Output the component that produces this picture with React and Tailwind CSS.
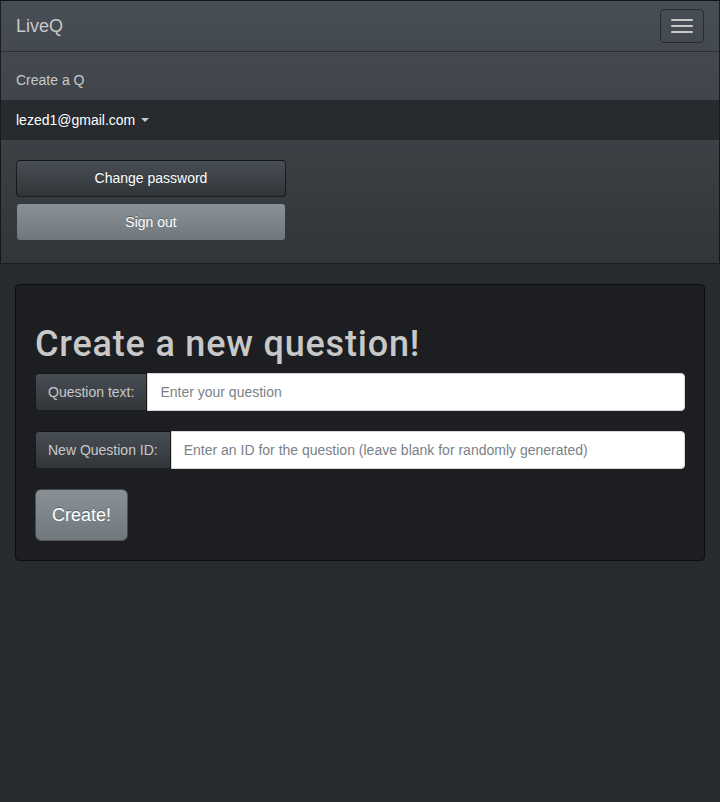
import React from "react";

export default function App() {
  return (
    <div className="min-h-screen bg-[#272b30] font-['Liberation_Sans',Arial,sans-serif] text-[14px] text-[#c8c8c8]">
      <nav className="border border-black/60 bg-[linear-gradient(#484e55,#3a3f44_60%,#313539)]">
        <div className="flex h-[50px] items-center justify-between px-[15px]">
          <span className="text-[18px] leading-[20px] text-[#c8c8c8]">LiveQ</span>
          <button className="flex h-[34px] w-[44px] flex-col items-center justify-center gap-[4px] rounded-[4px] border border-[#272b30]">
            <span className="block h-[2px] w-[22px] rounded-[1px] bg-[#c8c8c8]" />
            <span className="block h-[2px] w-[22px] rounded-[1px] bg-[#c8c8c8]" />
            <span className="block h-[2px] w-[22px] rounded-[1px] bg-[#c8c8c8]" />
          </button>
        </div>
        <div className="border-t border-[#2b2f33] py-[8px]">
          <div className="flex h-[40px] items-center px-[15px] text-[#c8c8c8]">Create a Q</div>
          <div className="flex h-[40px] items-center bg-[#272b30] px-[15px] text-white">
            lezed1@gmail.com
            <span className="ml-[6px] inline-block h-0 w-0 border-x-[4px] border-t-[4px] border-x-transparent border-t-[#c8c8c8]" />
          </div>
          <div className="flex flex-col px-[15px] pb-[15px] pt-[20px]">
            <button className="h-[37px] w-[270px] rounded-[4px] border border-black/60 bg-[linear-gradient(#484e55,#3a3f44_60%,#313539)] text-white [text-shadow:0_-1px_0_rgba(0,0,0,0.3)]">
              Change password
            </button>
            <button className="mt-[7px] ml-[1px] h-[36px] w-[268px] rounded-[3px] bg-[linear-gradient(#8a9196,#7a8288_60%,#70787d)] text-white [text-shadow:0_-1px_0_rgba(0,0,0,0.3)]">
              Sign out
            </button>
          </div>
        </div>
      </nav>
      <div className="px-[15px] pt-[20px]">
        <div className="rounded-[4px] border border-[#0c0d0e] bg-[#1c1e22] p-[19px]">
          <h1 className="mb-[9px] mt-[20px] font-['Roboto',sans-serif] text-[36px] font-medium leading-[40px] tracking-[0.8px] text-[#c8c8c8]">Create a new question!</h1>
          <div className="flex h-[38px]">
            <span className="flex items-center rounded-l-[4px] border border-black/60 bg-[linear-gradient(#484e55,#3a3f44_60%,#313539)] px-[12px] text-[#c8c8c8]">
              Question text:
            </span>
            <input
              className="flex-1 rounded-r-[4px] border border-[#d8d8d8] bg-white px-[12px] text-[14px] text-[#272b30] outline-none placeholder:text-[#7a8288]"
              placeholder="Enter your question"
            />
          </div>
          <div className="mt-[20px] flex h-[38px]">
            <span className="flex items-center rounded-l-[4px] border border-black/60 bg-[linear-gradient(#484e55,#3a3f44_60%,#313539)] px-[12px] text-[#c8c8c8]">
              New Question ID:
            </span>
            <input
              className="flex-1 rounded-r-[4px] border border-[#d8d8d8] bg-white px-[12px] text-[14px] text-[#272b30] outline-none placeholder:text-[#7a8288]"
              placeholder="Enter an ID for the question (leave blank for randomly generated)"
            />
          </div>
          <button className="mt-[20px] h-[52px] rounded-[6px] border border-black/40 bg-[linear-gradient(#8a9196,#7a8288_60%,#70787d)] px-[16px] text-[18px] text-white [text-shadow:0_-1px_0_rgba(0,0,0,0.3)]">
            Create!
          </button>
        </div>
      </div>
    </div>
  );
}
